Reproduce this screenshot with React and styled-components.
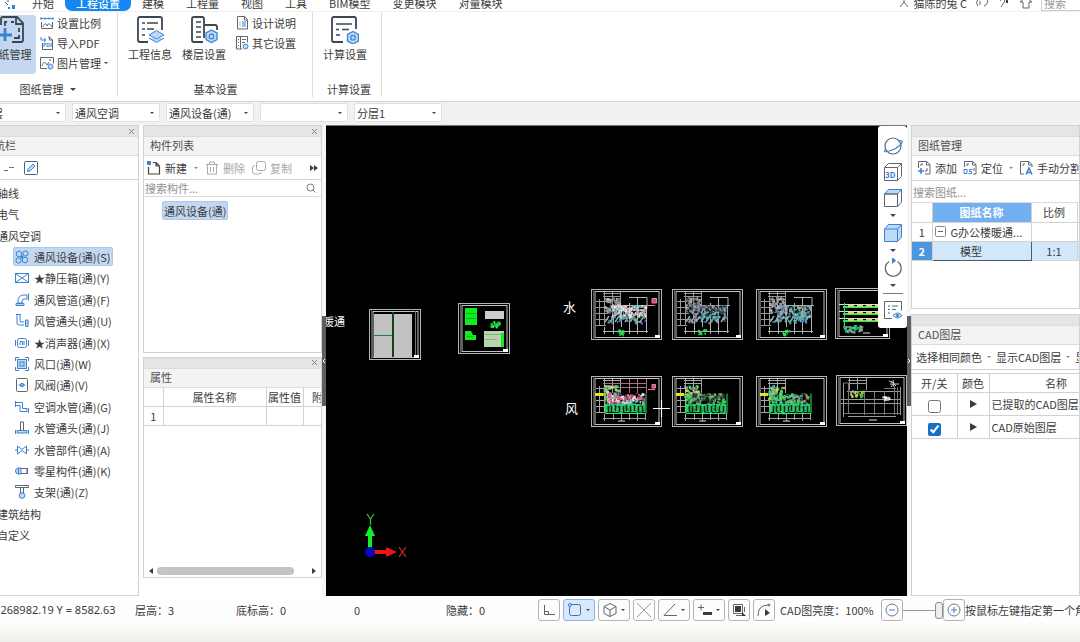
import React, { useState } from 'react'
import styled, { createGlobalStyle, css } from 'styled-components'

const colors = {
  text: '#3c3c3c',
  muted: '#a6a6a6',
  line: '#d2d2d2',
  strip: '#e5e5e5',
  title: '#f3f3f3',
  blue: '#3d82d2',
  lightBlue: '#bcd9f5',
  selected: '#c3d8f0',
  active: '#1488f0',
}

const GlobalStyle = createGlobalStyle`
  * {
    box-sizing: border-box;
  }
  body {
    margin: 0;
    overflow: hidden;
    background: #fff;
  }
  body, button, input, select, table {
    font-family: 'Noto Sans CJK SC', sans-serif;
    font-size: 11px;
    line-height: 16px;
    color: ${colors.text};
  }
  button {
    border: 0;
    padding: 0;
    background: none;
    white-space: nowrap;
  }
`

// the window hangs a little over the left edge of the screen
const Window = styled.div`
  display: flex;
  flex-direction: column;
  min-height: 100vh;
  margin-left: -24px;
`

const Drawing = styled.svg`
  display: block;
  flex: none;
  fill: none;
  stroke: ${props => props.$color || '#5f6670'};
  stroke-width: ${props => props.$weight || 1};
  .b { stroke: ${colors.blue}; }
  .f { stroke: ${colors.blue}; fill: ${colors.lightBlue}; }
  .s { fill: ${colors.blue}; stroke: none; }
  .k { fill: #3c3c3c; stroke: none; }
  text { stroke: none; fill: ${colors.blue}; font-weight: 700; }
`

const Icon = ({ size = 14, box = 14, children, ...rest }) => (
  <Drawing width={size} height={size} viewBox={`0 0 ${box} ${box}`} aria-hidden="true" {...rest}>
    {children}
  </Drawing>
)

const Caret = styled.span`
  flex: none;
  width: 0;
  height: 0;
  border: ${props => props.$size || 2}px solid transparent;
  border-top-color: ${props => props.$color || '#444'};
  border-bottom-width: 0;
`

/* ---------- menu ---------- */

const MenuBar = styled.header`
  display: flex;
  align-items: flex-end;
  height: 11px;
  padding-left: 28px;
  overflow: hidden;
  background: #fff;
`

const MenuTab = styled.button`
  flex: none;
  height: 17px;
  padding: 0 11px;
  ${props => props.$active && css`
    border-radius: 0 0 7px 7px;
    background: ${colors.active};
    color: #fff;
    font-weight: 500;
  `}
`

const Tabs = styled.nav`
  display: flex;
  padding-left: 3px;
`

const Account = styled.div`
  display: flex;
  align-items: center;
  gap: 8px;
  height: 17px;
  margin-left: auto;
  flex: none;
`

const AccountName = styled.span`
  display: flex;
  align-items: center;
  gap: 5px;
`

const MenuSearch = styled.input`
  width: 39px;
  height: 17px;
  padding: 0 2px;
  border: 1px solid #ccc;
  border-right: 0;
  outline: 0;
  &::placeholder { color: #999; }
`

/* ---------- ribbon ---------- */

const Ribbon = styled.section`
  display: flex;
  height: 91px;
  padding-left: 7px;
  background: #fff;
  border-top: 1px solid #f0f0f0;
  border-bottom: 1px solid #d4d4d4;
`

const Group = styled.div`
  display: flex;
  flex-direction: column;
  justify-content: space-between;
  margin-bottom: 4px;
  padding-right: ${props => props.$end || 0}px;
  padding-left: ${props => props.$start || 0}px;
  border-right: 1px solid #dcdcdc;
`

const GroupBody = styled.div`
  display: flex;
  padding-top: 3px;
`

const GroupLabel = styled.div`
  display: flex;
  align-items: center;
  justify-content: center;
  gap: 6px;
  height: 16px;
  padding-left: ${props => props.$indent || 0}px;
`

const BigButton = styled.button`
  display: flex;
  flex-direction: column;
  align-items: center;
  gap: 2px;
  width: ${props => props.$width || 54}px;
  height: 59px;
  padding-top: 1px;
  ${props => props.$active && css`
    border-radius: 3px;
    background: ${colors.selected};
  `}
`

const SmallColumn = styled.div`
  display: flex;
  flex-direction: column;
  gap: 4px;
  padding-left: 4px;
`

const SmallButton = styled.button`
  display: flex;
  align-items: center;
  gap: 3px;
`

/* ---------- combo row ---------- */

const ComboRow = styled.div`
  display: flex;
  gap: 6px;
  height: 23px;
  padding: 1px 0 3px 2px;
  background: #f1f1f1;
`

const Combo = styled.div`
  display: grid;
  align-items: center;
  width: 88px;
  height: 19px;
  border: 1px solid #e0e0e0;
  border-radius: 2px;
  background: #fff;
  > * { grid-area: 1 / 1; }
  ${Caret} {
    justify-self: end;
    margin-right: 5px;
    pointer-events: none;
  }
  select {
    width: 100%;
    padding: 0 2px;
    border: 0;
    outline: 0;
    appearance: none;
    background: none;
  }
`

/* ---------- panels ---------- */

const Workspace = styled.main`
  display: grid;
  grid-template-columns: 163px 4px 179px 4px minmax(0, 1fr) 4px 169px;
  flex: 1;
`

const Column = styled.div`
  display: flex;
  flex-direction: column;
  min-width: 0;
  gap: ${props => props.$gap || 0}px;
  padding-bottom: ${props => props.$bottom || 0}px;
`

const Panel = styled.section`
  display: flex;
  flex-direction: column;
  flex: ${props => props.$flex || '1'};
  min-width: 0;
  overflow: hidden;
  border: 1px solid ${colors.line};
  background: #fff;
`

const Strip = styled.div`
  display: flex;
  align-items: center;
  justify-content: flex-end;
  height: 10px;
  padding-right: 3px;
  background: ${colors.strip};
  button { display: flex; }
`

const Title = styled.h2`
  height: 20px;
  margin: 0;
  padding: 0 6px;
  font-size: 11px;
  line-height: 17px;
  font-weight: 400;
  color: #505050;
  background: ${colors.title};
  border-top: 1px solid #dcdcdc;
  border-bottom: 1px solid #dcdcdc;
`

const Tools = styled.div`
  display: flex;
  align-items: center;
  gap: ${props => props.$gap || 7}px;
  height: ${props => props.$height || 24}px;
  padding: 0 ${props => props.$pad || 3}px;
  border-bottom: 1px solid ${colors.line};
`

const ToolButton = styled.button`
  display: flex;
  align-items: center;
  gap: 4px;
  color: ${props => props.disabled ? colors.muted : colors.text};
`

const MoreButton = styled(ToolButton)`
  margin-left: auto;
`

const Search = styled.label`
  display: flex;
  align-items: center;
  height: ${props => props.$height || 17}px;
  padding: 0 5px 0 1px;
  border-bottom: 1px solid #dcdcdc;
  input {
    flex: 1;
    min-width: 0;
    padding: 0;
    border: 0;
    outline: 0;
    &::placeholder { color: #929292; }
  }
`

const Spacer = styled.div`
  height: 4px;
  border-bottom: 1px solid ${colors.line};
`

const Tree = styled.ul`
  display: flex;
  flex-direction: column;
  flex: 1;
  margin: 0;
  padding: 2px 0 49px 20px;
  list-style: none;
`

const TreeRow = styled.li`
  display: flex;
  align-items: center;
  flex: 1;
  padding-left: ${props => props.$child ? 16 : 0}px;
`

const TreeItem = styled.button`
  display: flex;
  align-items: center;
  gap: 5px;
  height: 19px;
  padding: 0 2px 0 1px;
  margin-left: ${props => props.$child ? 0 : -2}px;
  border-radius: 2px;
  border: 1px solid ${props => props.$active ? '#abc8e8' : 'transparent'};
  background: ${props => props.$active ? colors.selected : 'none'};
`

const PartList = styled.div`
  padding: 4px 18px;
`

const Part = styled.button`
  height: 19px;
  padding: 0 1px;
  border: 1px solid #abc8e8;
  border-radius: 2px;
  background: ${colors.selected};
`

const Sheet = styled.table`
  width: ${props => props.$width}px;
  table-layout: fixed;
  border-collapse: collapse;
  th, td {
    height: ${props => props.$row || 19}px;
    padding: 0;
    font-weight: 400;
    text-align: center;
    white-space: nowrap;
    border: 1px solid ${colors.line};
    border-top: 0;
    border-left: 0;
  }
  th { height: 19px; }
  svg { margin: 0 auto; }
`

const NameHead = styled.th`
  && {
    color: #fff;
    font-weight: 700;
    background: #72b0f1;
  }
`

const FileCell = styled.td`
  && { text-align: left; }
  div {
    display: flex;
    align-items: center;
    gap: 5px;
    padding-left: 2px;
  }
  svg { margin: 0; }
`

const ActiveRow = styled.tr`
  th { background: #4c96de; color: #fff; font-weight: 700; }
  td { background: #d3e7fb; }
  td:nth-child(2) {
    padding-right: 21px;
    border: 1px solid #4e5a66;
  }
`

const LeftCell = styled.td`
  && {
    padding-left: 2px;
    text-align: left;
  }
`

const CheckCell = styled.td`
  && { padding-top: 5px; }
  input {
    display: block;
    width: 13px;
    height: 13px;
    margin: 0 auto;
    accent-color: #1670c8;
  }
`

const ScrollBar = styled.div`
  display: flex;
  align-items: center;
  justify-content: space-between;
  height: 13px;
  margin-top: auto;
  padding: 0 4px;
`

const Thumb = styled.div`
  width: 137px;
  height: 8px;
  margin-right: 14px;
  border-radius: 4px;
  background: #c4c4c4;
`

const Splitter = styled.div`
  display: flex;
  flex-direction: column;
  justify-content: center;
  background: #f6f6f6;
`

const Grip = styled.div`
  display: flex;
  align-items: center;
  justify-content: center;
  height: 90px;
  background: #5b6066;
`

/* ---------- canvas ---------- */

const Canvas = styled.div`
  position: relative;
  overflow: hidden;
  background: #000;
  border-top: 1px solid #777;
`

const Plot = styled.svg`
  display: block;
  text {
    font-family: 'Noto Sans CJK SC', sans-serif;
    fill: #fff;
  }
`

const ViewTools = styled.div`
  position: absolute;
  top: 0;
  right: 0;
  display: flex;
  flex-direction: column;
  align-items: center;
  width: 29px;
  height: 202px;
  padding-top: 10px;
  gap: 6px;
  border-radius: 3px;
  background: #fff;
  button { display: flex; }
`

const ViewDrop = styled.button`
  flex-direction: column;
  align-items: center;
  gap: 6px;
  height: 29px;
`

const ViewLine = styled.div`
  width: 20px;
  height: 1px;
  background: #777;
`

/* ---------- status ---------- */

const Status = styled.footer`
  display: flex;
  align-items: flex-start;
  height: 46px;
  padding: 3px 0 0 6px;
  white-space: nowrap;
  overflow: hidden;
  background: linear-gradient(#fefefe 55%, #f9f8f5 75%, #efeeea);
`

const Readout = styled.span`
  flex: none;
  width: ${props => props.$width}px;
  line-height: 22px;
`

const Coords = styled(Readout)`
  font-family: 'Noto Sans', 'Noto Sans CJK SC', sans-serif;
`

const SnapBar = styled.div`
  display: flex;
  gap: 3px;
  margin-right: 5px;
`

const SnapButton = styled.button`
  display: flex;
  align-items: center;
  justify-content: center;
  gap: 4px;
  flex: none;
  width: ${props => props.$wide ? 32 : 22}px;
  height: 22px;
  border: 1px solid ${props => props.$active ? '#8cb2e4' : '#b4b4b4'};
  border-radius: 3px;
  background: ${props => props.$active ? '#d9e8fb' : '#fdfdfd'};
`

const Range = styled.input`
  appearance: none;
  flex: none;
  width: 40px;
  height: 22px;
  margin: 0;
  background: linear-gradient(#9a9a9a, #9a9a9a) center / 100% 1px no-repeat;
  &::-webkit-slider-thumb {
    appearance: none;
    width: 8px;
    height: 17px;
    border: 1px solid #8e8e8e;
    border-radius: 3px;
    background: #eee;
  }
`

/* ---------- icons ---------- */

const dark = '#3b4654'

const icons = {
  logo: <Icon $color="#3c50b8"><path d="M1 5l3 3M4 3v2" /><path className="s" d="M8 8h3v4H8zM4 10h2v2H4z" /></Icon>,
  close: <Icon size={7} box={7} $color="#888"><path d="M1 1l5 5M6 1L1 6" /></Icon>,
  sheets: (
    <Icon size={28} box={28} $weight={1.8} $color={dark}>
      <path d="M5 9V3q0-2 2-2h14l6 6v17q0 2-2 2h-9M20 1v7h7M11 6H9v4M15 6h3M23 12v4M23 19v3h-5" />
      <path className="b" d="M9 12v13M2 19h14" strokeWidth="3" />
    </Icon>
  ),
  info: (
    <Icon size={28} box={28} $weight={1.8} $color={dark}>
      <path d="M12 26H4q-2 0-2-2V3q0-2 2-2h20q2 0 2 2v11" />
      <path d="M6 7h3M11 7h11M6 13h3M11 13h7M6 19h3" strokeWidth="1.5" />
      <path className="f" d="M13 19l7.500-4.500L28 19l-7.500 4zM13 22l7.500 4.500L28 22" strokeWidth="1" />
    </Icon>
  ),
  floors: (
    <Icon size={28} box={28} $weight={1.8} $color={dark}>
      <path d="M13 26H4q-2 0-2-2V3q0-2 2-2h8q2 0 2 2v19M14 9h11q2 0 2 2v3" />
      <path d="M6 6h5M6 11h5M6 16h5M6 21h5" strokeWidth="1.5" />
      <path className="f" d="M21.500 14l5.500 3v6.500l-5.500 3-5.500-3V17z" strokeWidth="1.300" />
      <circle className="b" cx="21.500" cy="20.500" r="2.300" strokeWidth="1.200" />
    </Icon>
  ),
  calc: (
    <Icon size={28} box={28} $weight={1.8} $color={dark}>
      <path d="M12 26H3q-2 0-2-2V3q0-2 2-2h20q2 0 2 2v10" />
      <path d="M5 8h16M5 13.500h3M11 13.500h7M5 19h4" strokeWidth="1.500" />
      <path className="f" d="M22 15.500l5.500 3V25L22 28l-5.500-3v-6.500z" strokeWidth="1.300" />
      <circle className="b" cx="22" cy="21.700" r="2.300" strokeWidth="1.200" />
    </Icon>
  ),
  scale: <Icon><path className="b" d="M1 2.500h12M1 1v3M13 1v3M5 1.500v2M9 1.500v2" /><path d="M1.500 6v6.500h11V6M3 11c1-4 4-4 4-1 1-3 3-3 5 1" /></Icon>,
  pdf: <Icon><path d="M2.500 7v6.500h10V4l-3-3H8M9.500 1v3h3" /><path className="b" d="M1 1v3h5M4 2l2 2-2 2" /><text x="3" y="11" fontSize="5">PDF</text></Icon>,
  image: <Icon><path d="M7 12.500H.500v-11h13v6M2 10c1-5 4-4 5-1l2-3M9 4h2" /><circle className="f" cx="10.500" cy="10.500" r="2.500" /></Icon>,
  note: <Icon><path d="M2.500 .500h7l3 3v9.500h-10zM9.500 .500V4h3" /><path className="b" d="M4.500 6h1M7 6h4M4.500 8h1M7 8h4M4.500 10h1M7 10h4" /></Icon>,
  other: <Icon><path d="M7 13H1.500V.500h11v6M5.500 1v12M3 3.500h1M7 3.500h4M3 6.500h1M7 6.500h3M3 9.500h1" /><circle className="f" cx="10.500" cy="10.500" r="2.500" /></Icon>,
  edit: <Icon><rect x=".5" y=".5" width="13" height="13" rx="1" stroke="#4f5f7f" /><path className="f" d="M3.500 10.500l.5-2.500 5-5 2 2-5 5z" /></Icon>,
  collapse: <Icon size={10} box={10}><path d="M0 7.500h4" /><path className="b" d="M5 4.500h5" /></Icon>,
  create: <Icon $weight={1.2} $color="#444"><path d="M1.500 6v7h11V5L9 1.500H6M9 1.500V5h3" /><rect className="s" width="4" height="4" /></Icon>,
  trash: <Icon $color="#aaa"><path d="M1 3.500h12M4.500 3V1h5v2M2.500 4v9h9V4M5.500 6v5M8.500 6v5" /></Icon>,
  copy: <Icon $color="#aaa"><rect x="4.500" y=".5" width="9" height="9" rx="2" /><path d="M3 4.500Q.500 4.500.500 7v4q0 2 2 2h4q3 0 3-2" /></Icon>,
  lens: <Icon size={10} box={10} $color="#777"><circle cx="4.500" cy="4.500" r="3.500" /><path d="M7 7l2.500 2.500" /></Icon>,
  addSheet: <Icon><path d="M1.500 7V.500h8l3.500 3V13H8M9.500 .500V4H13M4 3h2M4 3v2M10 7v3H8" /><path className="b" d="M4 7v6M1 10h6" strokeWidth="1.500" /></Icon>,
  locate: <Icon><path d="M1.500 6V.500h8l3.500 3V13h-3M9.500 .500V4H13M4 3h2M4 3v2M11 7v3" /><path className="b" d="M1 8.500v4h3v-4zM5.500 12.500h3v-2h-2v-2h3" /></Icon>,
  split: <Icon><path d="M5 13H1.500V.500h8l3.500 3V6M9.500 .500V4H13M4 3h2M4 3v2" /><path className="b" d="M7 13.500L10 7l3 6.500M8 11.500h4" strokeWidth="1.500" /></Icon>,
  orbit: <Icon size={20} box={20} $weight={1.2}><circle cx="10" cy="10" r="8" /><path className="b" d="M3 13c-4 4 1 3 6 1 6-2 11-7 10-9q-1-1-4 0" /></Icon>,
  cube3d: <Icon size={20} box={20}><path d="M1.500 5.500h13v13h-13zM1.500 5.500l4-4h13l-4 4M18.500 1.500v13l-4 4" /><text x="2" y="16" fontSize="8">3D</text></Icon>,
  cubeTop: <Icon size={20} box={20}><path className="f" d="M1.500 6l4-4.500h13l-4 4.500z" /><path d="M1.500 6h13v12.500h-13zM18.500 1.500V14l-4 4.500" /></Icon>,
  cubeFull: <Icon size={20} box={20}><path className="f" d="M1.500 6l4-4.500h13V14l-4 4.500h-13zM1.500 6h13v12.500M14.500 6l4-4.500" /></Icon>,
  rotate: <Icon size={20} box={20} $weight={1.2}><path d="M6 3.500a8 8 0 1 0 8.500 0" /><path className="s" d="M9 -1l4 3.500L9 6z" /></Icon>,
  listEye: <Icon size={20} box={20}><path d="M9 18.500H1.500v-17h17v9M5 6h2M9 6h6M5 9.500h2M9 9.500h4M5 13h2" /><path className="f" d="M10 15.500q4.500-5 9 0-4.500 5-9 0z" /><circle className="s" cx="14.500" cy="15.500" r="1.500" /></Icon>,
  minus: <Icon size={11} box={11}><rect x=".5" y=".5" width="10" height="10" rx="1" stroke="#888" /><path d="M3 5.500h5" /></Icon>,
  play: <Icon size={8} box={8}><path className="k" d="M1 0l7 4-7 4z" /></Icon>,
  more: <Icon size={8} box={8}><path className="k" d="M0 1l4 3-4 3zM4 1l4 3-4 3z" /></Icon>,
}

const treeIcons = {
  fan: <Icon><circle className="f" cx="4" cy="4" r="2.800" /><circle className="f" cx="10.500" cy="3.500" r="2.600" /><circle className="f" cx="3.500" cy="10.500" r="2.600" /><circle className="f" cx="10" cy="10" r="2.800" /><circle className="s" cx="7" cy="7" r="1.500" /></Icon>,
  box: <Icon><rect className="b" x=".5" y="2.500" width="13" height="9" /><path className="b" d="M1 3l12 8M13 3L1 11" /></Icon>,
  duct: <Icon><path className="b" d="M3 10V8q0-6 6-6h3v4H9Q7 6 7 8v2z" /><path className="f" d="M1 10.500h8v2H1z" /><path className="b" d="M13.500 .500v7" /></Icon>,
  elbow: <Icon><path className="b" d="M1 .500h5M2 1v8q0 2 2 2h5M5 1v6q0 1 1 1h3" /><path className="f" d="M10.500 6v6.500H13V6z" /></Icon>,
  silencer: <Icon><rect className="b" x="2.500" y="2.500" width="9" height="9" rx="2" /><path className="b" d="M.500 4v6M13.500 4v6M5 9V5.500h2.500V9M9 9V5" /></Icon>,
  vent: <Icon><path className="b" d="M.500 4V.500H4M10 .500h3.500V4M13.500 10v3.500H10M4 13.500H.500V10" /><rect className="f" x="2.500" y="2.500" width="9" height="9" /><rect className="b" x="5" y="5" width="4" height="4" /></Icon>,
  valve: <Icon><rect x="1.500" y=".5" width="11" height="13" rx="1" /><circle className="f" cx="7" cy="7" r="1.800" /><path className="b" d="M3.500 7h7" /></Icon>,
  pipe: <Icon><path className="b" d="M.500 2.500h7v6h4.500v3H5v-6H.500z" /><path className="b" d="M.500 1v6M13.500 8v5" /></Icon>,
  joint: <Icon><path d="M5.500 9V1h3v8" /><path className="f" d="M2 9.500h10v2.500H2z" /><path className="b" d="M.500 9v4M13.500 9v4" /></Icon>,
  fitting: <Icon><path className="b" d="M2.500 3v8L7 7.500 11.500 11V3L7 6.500zM0 7h2M12 7h2" /></Icon>,
  misc: <Icon><path className="f" d="M6 4H3Q.500 4.500.500 7T3 10h3zM3.500 4v6" /><path d="M6 4.500h6v5H6M12.500 4v6" /></Icon>,
  bracket: <Icon><path d="M.500 .500h13v2H.500zM5.500 3v5M8.500 3v5" /><circle className="f" cx="7" cy="10.500" r="2.800" /></Icon>,
}

/* ---------- plotted sheets ---------- */

const GREEN = '#2ee65a'
const CYAN = '#43c5c0'
const PINK = '#e0447c'
const GREY = '#a6a6a6'
const YELLOW = '#e6e61e'

// small repeatable generator, the marks stay where they are between renders
const marks = (seed, count, [x, y, w, h], palette) => {
  let n = seed * 7919 + 17
  const next = () => {
    n = (n * 16807) % 2147483647
    return n / 2147483647
  }
  next()
  return Array.from({ length: count }, () => ({
    x: x + next() * w,
    y: y + next() * h,
    w: 1 + next() * 2,
    h: 1 + next() * 2,
    fill: palette[Math.floor(next() * palette.length)],
  }))
}

const Marks = ({ items }) => items.map((m, i) => (
  <rect key={i} x={m.x} y={m.y} width={m.w} height={m.h} fill={m.fill} opacity=".85" />
))

const Frame = ({ x, y, w = 70, h = 50, children }) => (
  <g transform={`translate(${x} ${y})`}>
    <rect x=".5" y=".5" width={w} height={h} fill="#000" stroke="#b4b4b4" />
    <rect x="4" y="2.500" width={w - 6} height={h - 4} fill="none" stroke="#c0c0c0" />
    <path d={`M2.500 1v${h - 1}`} stroke="#555" />
    {children}
    <rect x={w - 6} y={h - 4} width="5" height="3" fill="#fff" />
  </g>
)

const WaterPlan = ({ seed, stamp, palette }) => (
  <>
    <path d="M12 4.500h18M12 7.500h18M13.500 3v34M21.500 3v26M29.500 3v28M5 12.500h10M5 18.500h12M5 24.500h12M5 30.500h12M5 36.500h10M8.500 10v27" stroke="#989898" fill="none" />
    <path d="M12 42.500h45M13.500 38v7M22.500 30v15M30.500 16v22M38.500 14v31M46.500 8v37M55.500 16v28M38 8.500h18v8M30 16.500h28" stroke="#b2b2b2" fill="none" />
    <Marks items={marks(seed, 80, [13, 8, 15, 15], [GREY, '#ccc', '#889', '#7a8a84'])} />
    <Marks items={marks(seed + 5, 170, [20, 16, 34, 12], palette)} />
    <path d="M18 27l-4 6M23 27l-4 6M28 27l-4 6M33 27l-4 6M38 27l-4 6M43 27l-4 6M48 27l-4 6M53 27l-4 6" stroke="#86aeb4" strokeWidth="1.500" />
    <Marks items={marks(seed + 8, 30, [16, 27, 38, 6], [CYAN, GREY, '#5772b5'])} />
    <Marks items={marks(seed + 9, 14, [26, 40, 7, 5], [GREEN])} />
    {stamp && <path d="M61 9.500h4.500v4.500H61zM57 16.500h7" fill={PINK} stroke="#e28aa4" />}
  </>
)

const WindPlan = ({ seed, stamp, core }) => (
  <>
    <path d="M12 4.500h18M12 7.500h18M13.500 3v34M21.500 3v14M29.500 3v14M5 12.500h8M5 18.500h8M5 24.500h8M5 30.500h8M5 36.500h8M8.500 10v27M12 42.500h43M13.500 38v7M22.500 38v6M30.500 38v7M38.500 38v6M46.500 38v7M54.500 38v6" stroke="#a4a4a4" fill="none" />
    {stamp && <path d="M12 7.500h44M38.500 3v14M46.500 3v14M55.500 3v14M13 11.500h42" stroke="#b06a88" fill="none" />}
    <rect x="4" y="17" width="8" height="3" fill={YELLOW} />
    <Marks items={marks(seed, 70, [12, 9, 15, 14], [GREEN, GREY, YELLOW, CYAN, '#ccc'])} />
    <Marks items={marks(seed + 3, 170, [15, 17, 37, 10], core)} />
    <rect x="14" y="28" width="40" height="8" fill="#2fc65c" />
    <Marks items={marks(seed + 6, 45, [14, 27, 38, 9], [GREEN, '#158a48', CYAN])} />
    <path d="M17.500 30v6M20.500 30v6M24.500 29v6M28.500 30v6M32.500 30v6M35.500 29v6M39.500 30v6M43.500 29v6M47.500 30v6M51.500 30v6" stroke="#03251c" strokeWidth="1.500" />
    <path d="M14 17.500v20h41v-20" fill="none" stroke={GREEN} />
    <path d="M27 45h7" stroke="#ddd" />
    {stamp && <path d="M61 8.500h3.500v3.500H61zM57 13.500h7" fill={PINK} stroke="#e28aa4" />}
  </>
)

const Riser = () => (
  <>
    {[16, 23, 30].map(y => (
      <g key={y}>
        <path d={`M4 ${y + 0.5}h48`} stroke="#ddd" />
        <path d={`M8 ${y + 3}h38`} stroke={GREEN} strokeWidth="2" />
        <path d={`M13 ${y + 2}h30`} stroke="#e2d25a" strokeWidth="2" strokeDasharray="6 3" />
      </g>
    ))}
    <path d="M9.500 15v23M46.500 15v18" stroke={GREEN} />
    <Marks items={marks(31, 36, [8, 37, 18, 6], [CYAN, GREEN, GREY])} />
    <path d="M28 45h7" stroke="#ddd" />
  </>
)

const RoofPlan = () => (
  <>
    <path d="M7.500 8v34M12 5.500h18M12 8.500h18M13.500 3v12M21.500 3v12M30.500 3v12M11 16.500h53M64.500 12v28M5 24.500h60M5 28.500h60M12 41.500h48" stroke="#9c9c9c" fill="none" />
    <path d="M7 38.500h57M7.500 8h5v30M28.500 16v24M38.500 16v24M48.500 16v24M58.500 12v28M61.500 12v28M48 13.500h12" stroke="#787878" fill="none" />
    <Marks items={marks(12, 24, [14, 15, 14, 6], [YELLOW, GREEN, '#bbb'])} />
    <Marks items={marks(22, 14, [42, 21, 12, 3], ['#fff', '#bbb'])} />
    <path d="M53 6l5 2-3 4M57 5l1 7M54 9h9M55 6l5 5" stroke="#ccc" fill="none" />
    <path d="M33 45h8" stroke="#ddd" />
  </>
)

const CadPlot = () => (
  <Plot width="581" height="470" viewBox="0 1 581 470" role="img" aria-label="CAD">
    <text x="-3" y="201" fontSize="11">暖通</text>
    <text x="237" y="187" fontSize="13">水</text>
    <text x="239" y="288" fontSize="13">风</text>
    <Frame x={43} y={184} w={51}>
      <rect x="5" y="5" width="18" height="43" fill="#c2c2c2" />
      <rect x="25" y="5" width="18" height="43" fill="#c2c2c2" />
      <path d="M5 26.500h18M24 3v45" stroke="#27823b" />
      <path d="M46.500 2v46" stroke="#777" />
    </Frame>
    <Frame x={132} y={178} w={51}>
      <path d="M7 5h12v17H7zM7 28h6l2 4h3v5H7z" fill="#10ed1e" />
      <path d="M8 10.500h10M8 15.500h10M9 33.500h6" stroke="#0bb01a" />
      <rect x="27" y="8" width="19" height="8" fill="#ccc" />
      <Marks items={marks(4, 34, [31, 18, 9, 5], [GREEN, '#12b82c'])} />
      <rect x="26" y="28" width="20" height="16" fill="#b8d4ac" />
      <path d="M27 31.500h19M27 36.500h12" stroke="#8fae86" />
      <path d="M44.500 30v14" stroke="#10ed1e" strokeWidth="3" />
    </Frame>
    <Frame x={265} y={164}><WaterPlan seed={2} stamp palette={['#eee', '#ddd', '#ccc', '#eee', '#e8a9b8', CYAN]} /></Frame>
    <Frame x={346} y={164}><WaterPlan seed={11} palette={[GREY, CYAN, '#5772b5', '#333', '#222']} /></Frame>
    <Frame x={430} y={164}><WaterPlan seed={19} palette={[GREY, CYAN, '#5772b5', '#bbb', '#222']} /></Frame>
    <Frame x={509} y={163} w={54}><Riser /></Frame>
    <Frame x={265} y={251}><WindPlan seed={5} stamp core={[PINK, '#f3c0d0', '#eee', PINK, '#f0f0f0', CYAN]} /></Frame>
    <Frame x={346} y={251}><WindPlan seed={14} core={[GREEN, '#553044', '#222', GREEN, GREY]} /></Frame>
    <Frame x={430} y={251}><WindPlan seed={23} core={[GREEN, '#a88', CYAN, GREEN, '#222']} /></Frame>
    <Frame x={510} y={250}><RoofPlan /></Frame>
    <path d="M327 283.500h17M335.500 275v17" stroke="#fff" strokeWidth="1.200" />
    <path d="M44 424v-16" stroke="#14f024" strokeWidth="4" />
    <path d="M39 411l5-11 5 11z" fill="#14f024" />
    <path d="M48 427h14" stroke="#ee1515" strokeWidth="4" />
    <path d="M60 422l11 5-11 5z" fill="#ee1515" />
    <circle cx="44" cy="427" r="5" fill="#0808c4" />
    <path d="M41 389l3.500 5 3.500-5M44.500 394v6" stroke="#33c443" strokeWidth="1.200" fill="none" />
    <path d="M73 422l7 10M80 422l-7 10" stroke="#d62a2a" strokeWidth="1.200" />
  </Plot>
)

/* ---------- data ---------- */

const tabs = ['开始', '工程设置', '建模', '工程量', '视图', '工具', 'BIM模型', '变更模块', '对量模块']

const combos = [
  ['楼层', '首层'],
  ['专业', '通风空调'],
  ['构件类型', '通风设备(通)'],
  ['构件', ''],
  ['分层', '分层1'],
]

const tree = [
  { name: '轴线' },
  { name: '电气' },
  { name: '通风空调' },
  { name: '通风设备(通)(S)', icon: 'fan' },
  { name: '★静压箱(通)(Y)', icon: 'box' },
  { name: '通风管道(通)(F)', icon: 'duct' },
  { name: '风管通头(通)(U)', icon: 'elbow' },
  { name: '★消声器(通)(X)', icon: 'silencer' },
  { name: '风口(通)(W)', icon: 'vent' },
  { name: '风阀(通)(V)', icon: 'valve' },
  { name: '空调水管(通)(G)', icon: 'pipe' },
  { name: '水管通头(通)(J)', icon: 'joint' },
  { name: '水管部件(通)(A)', icon: 'fitting' },
  { name: '零星构件(通)(K)', icon: 'misc' },
  { name: '支架(通)(Z)', icon: 'bracket' },
  { name: '建筑结构' },
  { name: '自定义' },
]

const layers = [
  { id: 'picked', name: '已提取的CAD图层', on: false },
  { id: 'origin', name: 'CAD原始图层', on: true },
]

const snaps = [
  { name: '正交', icon: <Icon><path d="M2.500 2v9.500H13M3 8.500h3.500v3" /></Icon> },
  { name: '矩形', wide: true, active: true, icon: <Icon $color="#4f6f9f"><rect x="1.500" y="1.500" width="11" height="11" rx="2" /><circle className="f" cx="2" cy="2" r="1.500" /></Icon> },
  { name: '三维', wide: true, icon: <Icon><path d="M7 .500l6 3v7l-6 3-6-3v-7zM1 3.500l6 3.500 6-3.500M7 7v6.500" /></Icon> },
  { name: '交点', icon: <Icon $color="#999"><path d="M0 0l14 14M14 0L0 14" /></Icon> },
  { name: '角度', wide: true, icon: <Icon><path d="M12 1L1 12.500h13" /></Icon> },
  { name: '偏移', wide: true, icon: <Icon><path d="M0 4.500h6M3 1.500v6" /><path className="k" d="M5 9h9v3H5z" /></Icon> },
  { name: '填充', icon: <Icon><path d="M1.500 1.500h9v9h-9zM4 12.500h7M12.500 4v5" /><path className="k" d="M3 3h6v6H3zM10 9l4 4h-4z" /></Icon> },
  { name: '曲线', icon: <Icon><path d="M1 13Q1 2 11 2" /><path className="k" d="M8 6l5 4-5 3z" /><circle cx="12" cy="2" r="1" /></Icon> },
]

const PanelHead = ({ title, closable }) => (
  <>
    <Strip>{closable && <button aria-label="关闭">{icons.close}</button>}</Strip>
    <Title>{title}</Title>
  </>
)

const App = () => {
  const [current, setCurrent] = useState('通风设备(通)(S)')
  const [brightness, setBrightness] = useState(100)

  return (
    <Window>
      <GlobalStyle />
      <MenuBar>
        {icons.logo}
        <Tabs>
          {tabs.map(tab => <MenuTab key={tab} $active={tab === '工程设置'}>{tab}</MenuTab>)}
        </Tabs>
        <Account>
          <AccountName>
            <Icon size={10} box={10}><path d="M5 0v4L1 9M5 4l4 5" /></Icon>
            猫陈的兔 C
          </AccountName>
          <Icon><path d="M3 3q-3 4 0 7M5 5v4M9 10q5-2 3-8" /></Icon>
          <Icon><path d="M3 5q2-4 5 0L4 11" /><path className="k" d="M9 4h2v3H9z" /></Icon>
          <Icon><path d="M4 6H1l6-5 6 5h-3v6H4z" /></Icon>
          <MenuSearch aria-label="搜索" placeholder="搜索" />
        </Account>
      </MenuBar>

      <Ribbon>
        <Group $end={9}>
          <GroupBody>
            <BigButton $active $width={53}>{icons.sheets}图纸管理</BigButton>
            <SmallColumn>
              <SmallButton>{icons.scale}设置比例</SmallButton>
              <SmallButton>{icons.pdf}导入PDF</SmallButton>
              <SmallButton>{icons.image}图片管理<Caret /></SmallButton>
            </SmallColumn>
          </GroupBody>
          <GroupLabel $indent={4}>图纸管理 <Caret $size={3} /></GroupLabel>
        </Group>
        <Group $start={5} $end={16}>
          <GroupBody>
            <BigButton>{icons.info}工程信息</BigButton>
            <BigButton>{icons.floors}楼层设置</BigButton>
            <SmallColumn>
              <SmallButton>{icons.note}设计说明</SmallButton>
              <SmallButton>{icons.other}其它设置</SmallButton>
            </SmallColumn>
          </GroupBody>
          <GroupLabel $indent={12}>基本设置</GroupLabel>
        </Group>
        <Group $start={5} $end={9}>
          <GroupBody>
            <BigButton>{icons.calc}计算设置</BigButton>
          </GroupBody>
          <GroupLabel $indent={8}>计算设置</GroupLabel>
        </Group>
      </Ribbon>

      <ComboRow>
        {combos.map(([label, value]) => (
          <Combo key={label}>
            <select aria-label={label}><option>{value}</option></select>
            <Caret />
          </Combo>
        ))}
      </ComboRow>

      <Workspace>
        <Panel>
          <PanelHead title="导航栏" closable />
          <Tools $gap={10} $pad={27}>
            <ToolButton aria-label="折叠">{icons.collapse}</ToolButton>
            <ToolButton aria-label="编辑">{icons.edit}</ToolButton>
          </Tools>
          <Tree>
            {tree.map(({ name, icon }) => (
              <TreeRow key={name} $child={!!icon}>
                <TreeItem $child={!!icon} $active={name === current} onClick={() => setCurrent(name)}>
                  {icon && treeIcons[icon]}
                  {name}
                </TreeItem>
              </TreeRow>
            ))}
          </Tree>
        </Panel>
        <div />

        <Column $gap={4} $bottom={18}>
          <Panel $flex="228">
            <PanelHead title="构件列表" closable />
            <Tools>
              <ToolButton>{icons.create}新建</ToolButton>
              <Caret $color="#888" />
              <ToolButton disabled>{icons.trash}删除</ToolButton>
              <ToolButton disabled>{icons.copy}复制</ToolButton>
              <MoreButton aria-label="更多">{icons.more}</MoreButton>
            </Tools>
            <Search>
              <input aria-label="搜索构件" placeholder="搜索构件..." />
              {icons.lens}
            </Search>
            <PartList>
              <Part>通风设备(通)</Part>
            </PartList>
          </Panel>
          <Panel $flex="221">
            <PanelHead title="属性" closable />
            <Sheet $width={197}>
              <colgroup><col width="19" /><col width="103" /><col width="37" /><col width="38" /></colgroup>
              <thead>
                <tr><th /><th>属性名称</th><th>属性值</th><th>附...</th></tr>
              </thead>
              <tbody>
                <tr><th>1</th><td /><td /><td /></tr>
              </tbody>
            </Sheet>
            <ScrollBar>
              <Icon size={6} box={6}><path className="k" d="M5 0v6L1 3z" /></Icon>
              <Thumb />
              <Icon size={6} box={6}><path className="k" d="M1 0v6l4-3z" /></Icon>
            </ScrollBar>
          </Panel>
        </Column>

        <Splitter>
          <Grip><Icon size={4} box={4} $color="#fff"><path d="M3 0L1 2l2 2" /></Icon></Grip>
        </Splitter>
        <Canvas>
          <CadPlot />
          <ViewTools>
            <button aria-label="动态观察">{icons.orbit}</button>
            <button aria-label="三维">{icons.cube3d}</button>
            <ViewDrop aria-label="俯视">{icons.cubeTop}<Caret $size={3} /></ViewDrop>
            <ViewDrop aria-label="实体">{icons.cubeFull}<Caret $size={3} /></ViewDrop>
            <ViewDrop aria-label="旋转">{icons.rotate}<Caret $size={3} /></ViewDrop>
            <ViewLine />
            <button aria-label="显示设置">{icons.listEye}</button>
          </ViewTools>
        </Canvas>
        <Splitter>
          <Grip><Icon size={4} box={4} $color="#fff"><path d="M1 0l2 2-2 2" /></Icon></Grip>
        </Splitter>

        <Column $gap={5}>
          <Panel $flex="none">
            <PanelHead title="图纸管理" />
            <Tools $gap={6} $pad={5} $height={25}>
              <ToolButton>{icons.addSheet}添加</ToolButton>
              <ToolButton>{icons.locate}定位</ToolButton>
              <Caret $color="#888" />
              <ToolButton>{icons.split}手动分割</ToolButton>
            </Tools>
            <Search $height={22}>
              <input aria-label="搜索图纸" placeholder="搜索图纸..." />
            </Search>
            <Column $bottom={47}>
              <Sheet $width={211}>
                <colgroup><col width="20" /><col width="99" /><col width="46" /><col width="46" /></colgroup>
                <thead>
                  <tr><th /><NameHead>图纸名称</NameHead><th>比例</th><th /></tr>
                </thead>
                <tbody>
                  <tr>
                    <th>1</th>
                    <FileCell><div>{icons.minus}G办公楼暖通...</div></FileCell>
                    <td />
                    <td />
                  </tr>
                  <ActiveRow><th>2</th><td>模型</td><td>1:1</td><td /></ActiveRow>
                </tbody>
              </Sheet>
            </Column>
          </Panel>
          <Panel>
            <PanelHead title="CAD图层" />
            <Tools $gap={5} $pad={4} $height={25}>
              <ToolButton>选择相同颜色</ToolButton>
              <Caret $color="#888" />
              <ToolButton>显示CAD图层</ToolButton>
              <Caret $color="#888" />
              <ToolButton>显示</ToolButton>
            </Tools>
            <Spacer />
            <Sheet $width={211} $row={23}>
              <colgroup><col width="45" /><col width="32" /><col width="134" /></colgroup>
              <thead>
                <tr><th>开/关</th><th>颜色</th><th>名称</th></tr>
              </thead>
              <tbody>
                {layers.map(({ id, name, on }) => (
                  <tr key={id}>
                    <CheckCell><input id={id} type="checkbox" defaultChecked={on} /></CheckCell>
                    <td>{icons.play}</td>
                    <LeftCell><label htmlFor={id}>{name}</label></LeftCell>
                  </tr>
                ))}
              </tbody>
            </Sheet>
          </Panel>
        </Column>
      </Workspace>

      <Status>
        <Coords $width={153}>X = 268982.19 Y = 8582.63</Coords>
        <Readout $width={101}>层高：3</Readout>
        <Readout $width={118}>底标高：0</Readout>
        <Readout $width={92}>0</Readout>
        <Readout $width={92}>隐藏：0</Readout>
        <SnapBar>
          {snaps.map(({ name, icon, wide, active }) => (
            <SnapButton key={name} aria-label={name} $wide={wide} $active={active}>
              {icon}
              {wide && <Caret />}
            </SnapButton>
          ))}
        </SnapBar>
        <Readout $width={101}>CAD图亮度：{brightness}%</Readout>
        <SnapButton aria-label="调暗" onClick={() => setBrightness(brightness - 10)}>
          <Icon $color="#777"><circle cx="7" cy="7" r="6" /><path className="b" d="M4 7h6" /></Icon>
        </SnapButton>
        <Range
          type="range"
          aria-label="CAD图亮度"
          value={brightness}
          onChange={e => setBrightness(Number(e.target.value))}
        />
        <SnapButton aria-label="调亮" onClick={() => setBrightness(brightness + 10)}>
          <Icon $color="#777"><circle cx="7" cy="7" r="6" /><path className="b" d="M4 7h6M7 4v6" /></Icon>
        </SnapButton>
        <Readout $width={160}>按鼠标左键指定第一个角点</Readout>
      </Status>
    </Window>
  )
}

export default App
